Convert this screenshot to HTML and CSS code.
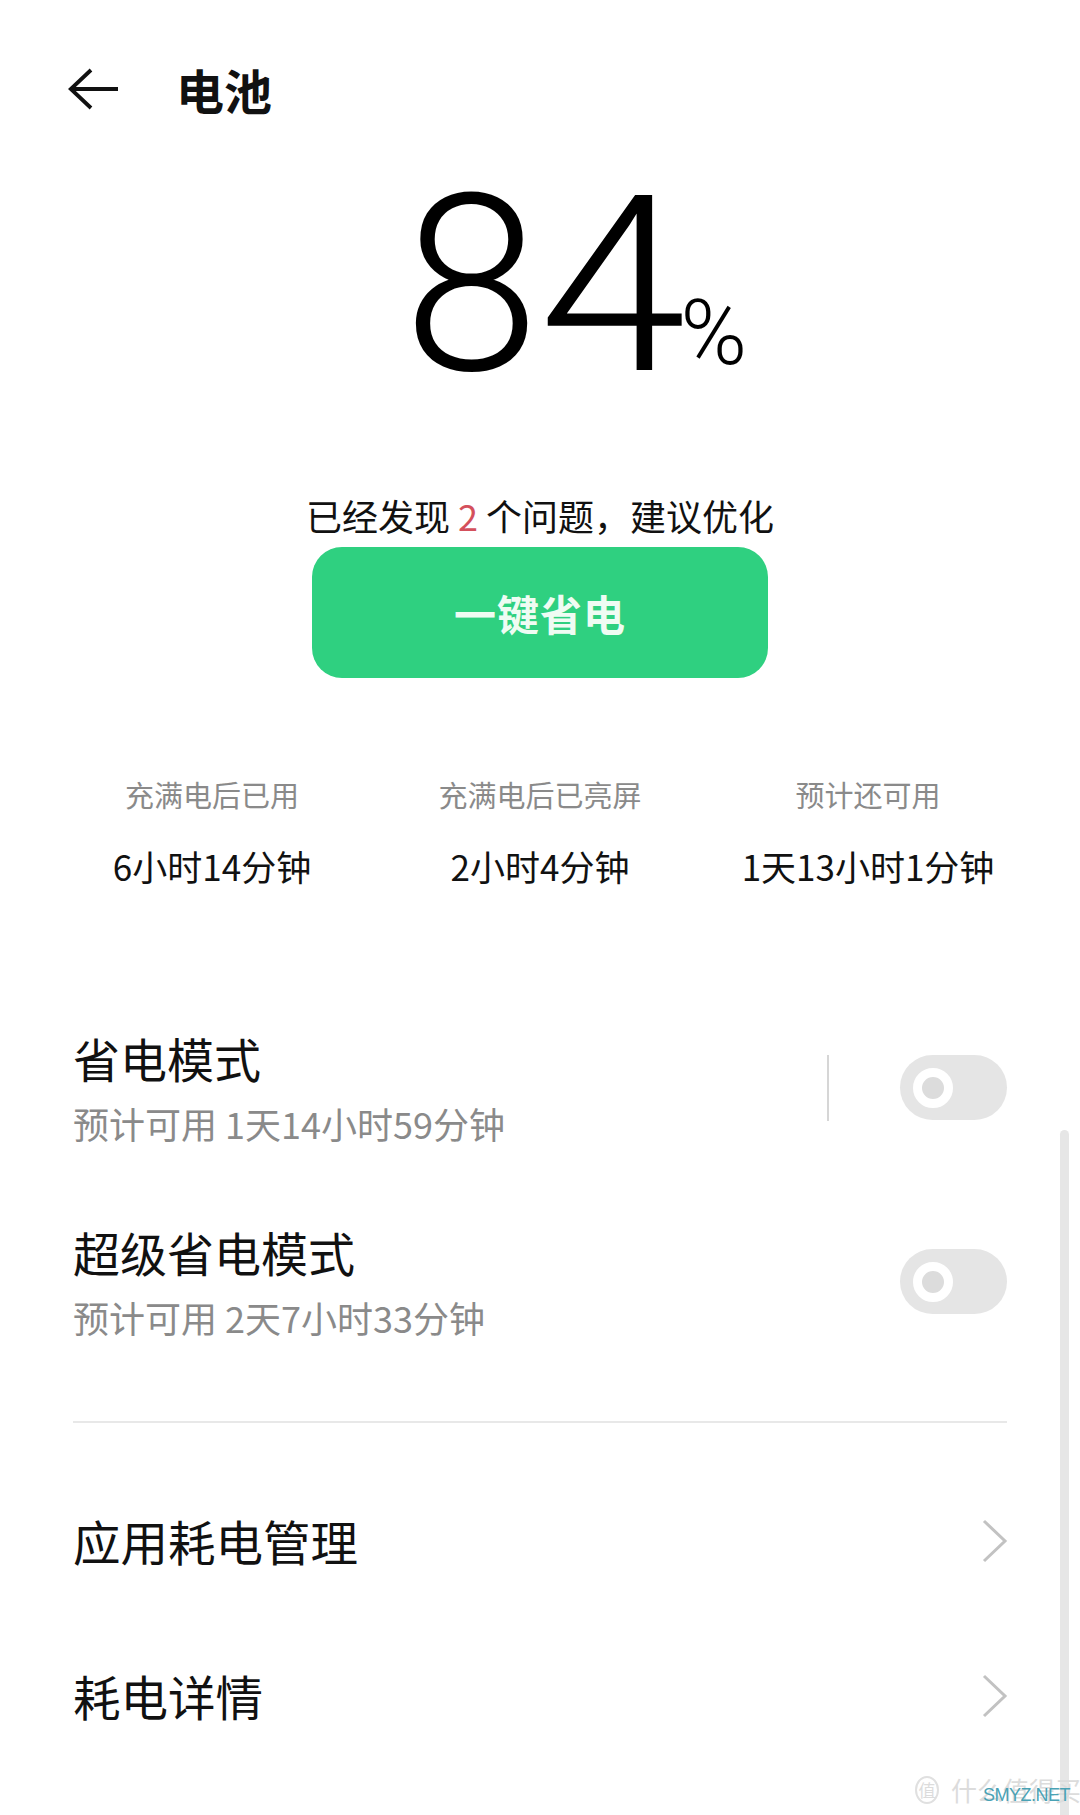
FILE: index.html
```html
<!DOCTYPE html>
<html lang="zh-CN">
<head>
<meta charset="utf-8">
<title>电池</title>
<link rel="stylesheet" href="styles.css">
</head>
<body>
<div class="screen">
  <header class="topbar">
    <svg class="back" width="52" height="42" viewBox="0 0 52 42" aria-hidden="true">
      <path d="M23 2 L2.8 21 L23 40 M2.8 21 H50" fill="none" stroke="#111" stroke-width="3.8" stroke-linecap="butt" stroke-linejoin="miter"/>
    </svg>
    <h1 class="title">电池</h1>
  </header>

  <div class="level"><span class="digit eight">8</span><span class="digit four">4</span><span class="pct">%</span></div>

  <p class="hint">已经发现 <span class="red">2</span> 个问题，建议优化</p>
  <div class="btn-wrap"><button class="save-btn">一键省电</button></div>

  <div class="stats">
    <div class="stat"><div class="stat-label">充满电后已用</div><div class="stat-value">6小时14分钟</div></div>
    <div class="stat"><div class="stat-label">充满电后已亮屏</div><div class="stat-value">2小时4分钟</div></div>
    <div class="stat"><div class="stat-label">预计还可用</div><div class="stat-value">1天13小时1分钟</div></div>
  </div>

  <section class="modes">
    <div class="row">
      <div class="row-text">
        <div class="row-title">省电模式</div>
        <div class="row-sub">预计可用 1天14小时59分钟</div>
      </div>
      <div class="vdiv"></div>
      <div class="toggle"><span class="knob"></span></div>
    </div>
    <div class="row">
      <div class="row-text">
        <div class="row-title">超级省电模式</div>
        <div class="row-sub">预计可用 2天7小时33分钟</div>
      </div>
      <div class="toggle"><span class="knob"></span></div>
    </div>
  </section>

  <div class="hdiv"></div>

  <nav class="links">
    <div class="link">
      <span class="link-title">应用耗电管理</span>
      <svg class="chev" width="26" height="44" viewBox="0 0 26 44" aria-hidden="true"><path d="M2 2 L23 22 L2 42" fill="none" stroke="#c2c2c2" stroke-width="3"/></svg>
    </div>
    <div class="link">
      <span class="link-title">耗电详情</span>
      <svg class="chev" width="26" height="44" viewBox="0 0 26 44" aria-hidden="true"><path d="M2 2 L23 22 L2 42" fill="none" stroke="#c2c2c2" stroke-width="3"/></svg>
    </div>
  </nav>

  <div class="scrollbar"></div>
  <div class="watermark"><span class="wm-circle">值</span><span class="wm-cn">什么值得买</span><span class="wm-en">SMYZ.NET</span></div>
</div>
</body>
</html>
```

FILE: styles.css
```css
* { box-sizing: border-box; }
html, body { margin: 0; padding: 0; background: #fff; }
body {
  font-family: "Noto Sans CJK SC", "Noto Sans", sans-serif;
  color: #111;
}
.screen {
  position: relative;
  width: 1080px;
  height: 1815px;
  overflow: hidden;
  background: #fff;
}

.topbar {
  height: 158px;
  padding: 20px 0 0 68px;
  display: flex;
  align-items: center;
}
.back { display: block; }
.title {
  margin: 0 0 0 56px;
  font-size: 48px;
  line-height: 52px;
  font-weight: 700;
  color: #111;
}

.level {
  display: flex;
  justify-content: center;
  align-items: baseline;
  font-family: Roboto, "Liberation Sans", sans-serif;
  font-weight: 300;
  color: #000;
  line-height: 1;
  height: 255px;
  padding-top: 5px;
}
.digit { font-size: 246px; }
.eight { margin-left: 12px; }
.four {
  width: 125px;
  white-space: nowrap;
  transform: scaleX(1.08);
  transform-origin: left bottom;
}
.pct {
  font-size: 90px;
  margin-right: -58px;
  margin-left: 16px;
  position: relative;
  top: -6px;
}

.hint {
  margin: 77px 0 0;
  text-align: center;
  font-size: 36px;
  line-height: 50px;
  color: #111;
}
.red { color: #d4505c; }

.btn-wrap { display: flex; justify-content: center; margin-top: 7px; }
.save-btn {
  width: 456px;
  height: 131px;
  border: 0;
  border-radius: 30px;
  background: #2fd080;
  color: #effcf3;
  font-family: "Noto Sans CJK SC", sans-serif;
  font-size: 42px;
  font-weight: 700;
  letter-spacing: 1px;
  padding: 0;
}

.stats {
  display: grid;
  grid-template-columns: 1fr 1fr 1fr;
  padding: 0 48px;
  margin-top: 96px;
  text-align: center;
}
.stat-label {
  font-size: 29px;
  line-height: 40px;
  color: #8a8a8a;
}
.stat-value {
  margin-top: 30px;
  font-size: 35px;
  line-height: 44px;
  color: #111;
}

.modes { margin-top: 101px; padding: 0 73px; }
.row {
  display: flex;
  align-items: center;
  padding: 41px 0 38px;
}
.row-text { flex: 1; }
.row-title {
  font-size: 47px;
  line-height: 56px;
  color: #111;
}
.row-sub {
  margin-top: 15px;
  font-size: 36px;
  line-height: 44px;
  color: #8a8a8a;
}
.vdiv {
  width: 2px;
  height: 66px;
  background: #d6d6d6;
  margin-right: 71px;
}
.toggle {
  width: 107px;
  height: 65px;
  border-radius: 33px;
  background: #e5e5e5;
  display: flex;
  align-items: center;
  padding-left: 13px;
}
.knob {
  width: 40px;
  height: 40px;
  border-radius: 50%;
  border: 9px solid #fff;
  background: #dcdcdc;
}

.hdiv {
  margin: 44px 73px 0;
  height: 2px;
  background: #e8e8e8;
}

.links { margin-top: 40px; padding: 0 72px 0 73px; }
.link {
  height: 155px;
  display: flex;
  align-items: center;
  justify-content: space-between;
}
.link-title {
  font-size: 47.5px;
  line-height: 56px;
  color: #111;
}
.chev { display: block; }

.scrollbar {
  position: absolute;
  left: 1060px;
  top: 1130px;
  width: 9px;
  height: 700px;
  border-radius: 5px;
  background: #e6e6e6;
}

.watermark {
  position: absolute;
  left: 915px;
  top: 1772px;
  width: 165px;
  height: 36px;
  display: flex;
  align-items: center;
  font-family: "Noto Sans CJK SC", sans-serif;
  color: #dcdcdc;
  overflow: hidden;
}
.wm-circle {
  width: 24px;
  height: 28px;
  border: 2px solid #e0e0e0;
  border-radius: 50%;
  font-size: 17px;
  line-height: 24px;
  text-align: center;
  margin-right: 12px;
  flex: none;
}
.wm-cn { font-size: 26px; line-height: 30px; white-space: nowrap; }
.wm-en {
  position: absolute;
  left: 68px;
  top: 13px;
  font-family: "Liberation Sans", sans-serif;
  font-size: 18px;
  line-height: 20px;
  color: #49a2b5;
  letter-spacing: -0.5px;
}
```
